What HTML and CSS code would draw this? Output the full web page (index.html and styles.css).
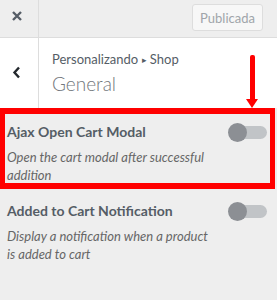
FILE: index.html
```html
<!DOCTYPE html>
<html lang="pt">
<head>
  <meta charset="UTF-8" />
  <meta name="viewport" content="width=device-width, initial-scale=1.0" />
  <title>Personalizando Shop</title>
  <link rel="stylesheet" href="styles.css">
</head>
<body>
  <div id="customizer">
    <div class="topbar">
      <div class="close">
        <svg width="10" height="10" viewBox="0 0 10 10"><path d="M1 1L9 9M9 1L1 9" stroke="#555d66" stroke-width="2.4" fill="none"/></svg>
      </div>
      <button class="publish">Publicada</button>
    </div>

    <div class="section-head">
      <div class="back">
        <svg width="9" height="13" viewBox="0 0 9 13"><path d="M7 1.5L2.5 6.5L7 11.5" stroke="#23282d" stroke-width="2.4" fill="none"/></svg>
      </div>
      <div class="titles">
        <div class="crumb">Personalizando <span class="sep">&#9656;</span> Shop</div>
        <div class="title">General</div>
      </div>
    </div>

    <div class="control highlight">
      <div class="row">
        <span class="label">Ajax Open Cart Modal</span>
        <span class="toggle"><span class="knob"></span></span>
      </div>
      <p class="desc">Open the cart modal after successful addition</p>
    </div>

    <div class="control">
      <div class="row">
        <span class="label">Added to Cart Notification</span>
        <span class="toggle"><span class="knob"></span></span>
      </div>
      <p class="desc">Display a notification when a product is added to cart</p>
    </div>

    <!-- annotation arrow -->
    <div class="arrow"></div>
  </div>
</body>
</html>
```

FILE: styles.css
```css
body {
  margin: 0;
  background: #eee;
  font-family: Lato, "Open Sans", sans-serif;
  color: #555d66;
}
#customizer {
  position: relative;
  width: 277px;
  height: 300px;
  overflow: hidden;
}
.topbar {
  display: flex;
  align-items: flex-start;
  justify-content: space-between;
  height: 37px;
  border-bottom: 1px solid #ddd;
}
.close {
  width: 39px;
  height: 37px;
  box-sizing: border-box;
  border-right: 1px solid #ddd;
  padding: 11px 0 0 12px;
}
.close svg {
  display: block;
}
.publish {
  margin: 4px 14px 0 0;
  width: 71px;
  height: 27px;
  padding: 0;
  background: #f7f7f7;
  border: 1px solid #ddd;
  border-radius: 3px;
  color: #a0a5aa;
  font-family: Lato, "Open Sans", sans-serif;
  font-size: 13px;
}
.section-head {
  display: flex;
  height: 70px;
  background: #fff;
}
.back {
  width: 39px;
  box-sizing: border-box;
  border-right: 1px solid #ddd;
  padding: 28px 0 0 12px;
}
.back svg {
  display: block;
}
.titles {
  padding: 12px 0 0 13px;
}
.crumb {
  font-size: 13px;
  line-height: 18px;
}
.sep {
  font-size: 9px;
  vertical-align: 1px;
}
.title {
  margin-top: 2px;
  font-size: 19px;
  font-weight: 300;
  line-height: 26px;
  color: #72777c;
}
.control {
  padding: 12px 10px 0 7px;
}
.control.highlight {
  width: 275px;
  height: 81px;
  box-sizing: border-box;
  border: 5px solid #f00;
  border-width: 6px 5px;
  padding: 8px 3px 0 2px;
}
.row {
  display: flex;
  justify-content: space-between;
  align-items: center;
  height: 20px;
}
.label {
  font-size: 14px;
  font-weight: 700;
  line-height: 20px;
}
.toggle {
  position: relative;
  width: 37px;
  height: 13px;
  border-radius: 7px;
  background: #c1c4c7;
}
.knob {
  position: absolute;
  left: -2px;
  top: -3px;
  width: 19px;
  height: 19px;
  border-radius: 50%;
  background: #8c8f94;
}
.desc {
  margin: 6px 0 0;
  width: 210px;
  font-size: 13px;
  font-style: italic;
  line-height: 18px;
  color: #666;
}
.arrow {
  position: absolute;
  left: 250px;
  top: 55px;
  width: 5px;
  height: 46px;
  background: #f00;
  border-radius: 2px 2px 0 0;
}
.arrow::after {
  content: "";
  position: absolute;
  left: -4px;
  top: 44px;
  border-left: 6.5px solid transparent;
  border-right: 6.5px solid transparent;
  border-top: 9px solid #f00;
}
```
